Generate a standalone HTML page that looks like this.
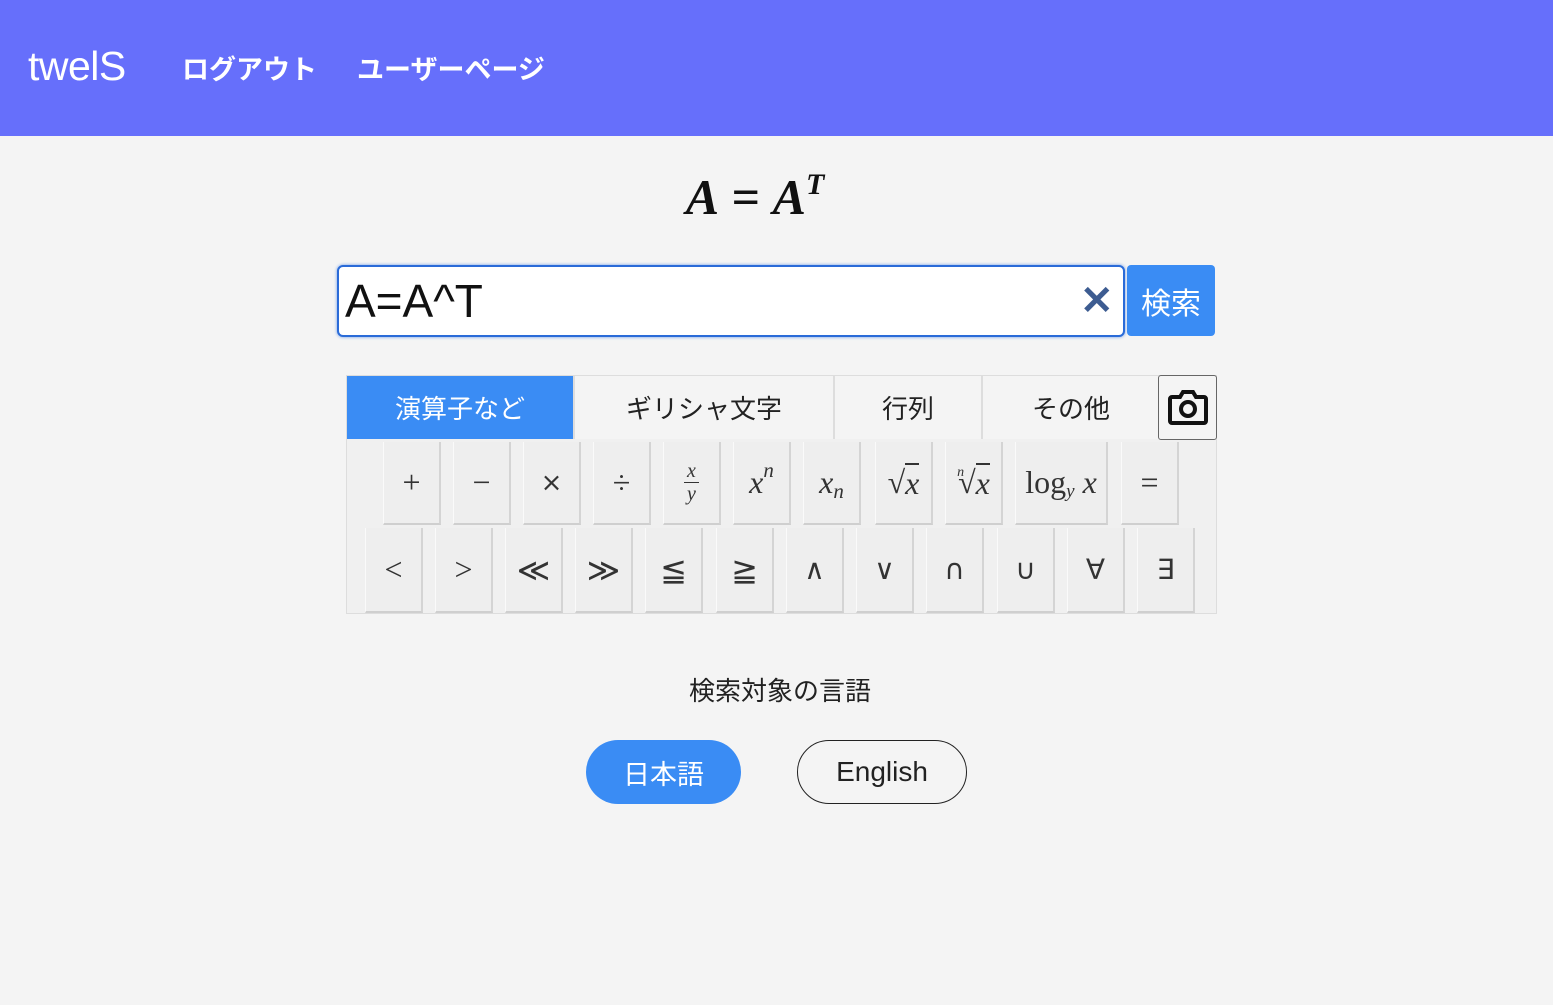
<!DOCTYPE html>
<html><head><meta charset="utf-8"><style>
*{box-sizing:border-box;margin:0;padding:0}
body{width:1553px;height:1005px;background:#f4f4f4;font-family:"Liberation Sans","Noto Sans CJK JP",sans-serif;position:relative;overflow:hidden}
.hd{position:absolute;left:0;top:0;width:1553px;height:136px;background:#666ffb;color:#fff}
.abs{position:absolute}
.key{position:absolute;width:58px;background:#eeeeee;border-right:2px solid #d4d4d4;border-bottom:2px solid #cfcfcf;border-left:1px solid #fafafa;display:flex;align-items:center;justify-content:center;font-family:"Liberation Serif","DejaVu Serif",serif;font-size:32px;color:#333}
.key span{display:inline-block}
.r1{top:442px;height:83px}
.r2{top:528px;height:85px}
.tab{position:absolute;top:376px;height:63px;display:flex;align-items:center;justify-content:center;font-size:26px;color:#222;background:#f4f4f4;border-right:2px solid #ddd}
i{font-style:italic}
.up{position:relative;top:-12px;font-size:21px}
.dn{position:relative;top:9px;font-size:21px}
</style></head><body>
<div class="hd">
<div class="abs" style="left:28px;top:43px;font-size:41px;letter-spacing:-0.5px">twelS</div>
<div class="abs" style="left:182px;top:48px;font-size:27px;font-weight:bold">ログアウト</div>
<div class="abs" style="left:357px;top:48px;font-size:27px;font-weight:bold">ユーザーページ</div>
</div>
<div class="abs" style="left:0;width:1510px;top:168px;text-align:center;font-family:'Liberation Serif',serif;font-size:50px;color:#111;font-weight:bold"><i>A</i> = <i>A</i><span style="font-size:30px;position:relative;top:-20px"><i>T</i></span></div>
<div class="abs" style="left:337px;top:265px;width:788px;height:72px;border:2px solid #2a6bd8;border-radius:6px;background:#fff;box-shadow:0 0 3px #6a9ae8"></div>
<div class="abs" style="left:345px;top:274px;font-size:46px;color:#111">A=A^T</div>
<div class="abs" style="left:1080px;top:278px;font-size:40px;color:#3d5c91;font-weight:bold">✕</div>
<div class="abs" style="left:1127px;top:265px;width:88px;height:71px;background:#3a8cf4;border-radius:4px;color:#fff;font-size:30px;display:flex;align-items:center;justify-content:center">検索</div>
<div class="abs" style="left:346px;top:375px;width:871px;height:239px;background:#f0f0f0;border:1px solid #ddd"></div>
<div class="tab" style="left:347px;width:228px;background:#3a8cf4;color:#fff">演算子など</div>
<div class="tab" style="left:575px;width:260px">ギリシャ文字</div>
<div class="tab" style="left:835px;width:148px">行列</div>
<div class="tab" style="left:983px;width:176px;border-right:none">その他</div>
<div class="abs" style="left:1158px;top:375px;width:59px;height:65px;border:1px solid #666;border-radius:3px;background:#f4f4f4;display:flex;align-items:center;justify-content:center">
<svg width="42" height="40" viewBox="0 0 42 40"><path d="M5 9h8l3-5h10l3 5h8a2 2 0 0 1 2 2v22a2 2 0 0 1-2 2H5a2 2 0 0 1-2-2V11a2 2 0 0 1 2-2z" fill="none" stroke="#111" stroke-width="4"/><circle cx="21" cy="21" r="7" fill="none" stroke="#111" stroke-width="4"/></svg></div>
<div class="key r1" style="left:383px">+</div>
<div class="key r1" style="left:453px">−</div>
<div class="key r1" style="left:523px;font-family:'DejaVu Sans';font-size:26px">×</div>
<div class="key r1" style="left:593px">÷</div>
<div class="key r1" style="left:663px;flex-direction:column;font-size:20px;line-height:22px"><i style="border-bottom:1px solid #333;padding:0 3px">x</i><i>y</i></div>
<div class="key r1" style="left:733px"><i>x</i><i class="up">n</i></div>
<div class="key r1" style="left:803px"><i>x</i><i class="dn">n</i></div>
<div class="key r1" style="left:875px">√<i style="border-top:2px solid #333">x</i></div>
<div class="key r1" style="left:945px"><i style="font-size:14px;position:relative;top:-10px;margin-right:-6px">n</i>√<i style="border-top:2px solid #333">x</i></div>
<div class="key r1" style="left:1015px;width:93px">log<i class="dn" style="font-size:19px">y</i>&nbsp;<i>x</i></div>
<div class="key r1" style="left:1121px">=</div>
<div class="key r2" style="left:365px">&lt;</div>
<div class="key r2" style="left:435px">&gt;</div>
<div class="key r2" style="left:505px;font-family:'DejaVu Sans';font-weight:200">≪</div>
<div class="key r2" style="left:575px;font-family:'DejaVu Sans'">≫</div>
<div class="key r2" style="left:645px;font-family:'DejaVu Sans'">≦</div>
<div class="key r2" style="left:716px;font-family:'DejaVu Sans'">≧</div>
<div class="key r2" style="left:786px;font-family:'DejaVu Sans';font-size:28px">∧</div>
<div class="key r2" style="left:856px;font-family:'DejaVu Sans';font-size:28px">∨</div>
<div class="key r2" style="left:926px;font-family:'DejaVu Sans';font-size:28px">∩</div>
<div class="key r2" style="left:997px;font-family:'DejaVu Sans';font-size:28px">∪</div>
<div class="key r2" style="left:1067px;font-family:'DejaVu Sans';font-size:28px">∀</div>
<div class="key r2" style="left:1137px;font-family:'DejaVu Sans';font-size:28px">∃</div>
<div class="abs" style="left:0;width:1560px;top:671px;text-align:center;font-size:26px;color:#222">検索対象の言語</div>
<div class="abs" style="left:586px;top:740px;width:155px;height:64px;border-radius:32px;background:#3a8cf4;color:#fff;font-size:27px;display:flex;align-items:center;justify-content:center">日本語</div>
<div class="abs" style="left:797px;top:740px;width:170px;height:64px;border-radius:32px;border:1.5px solid #222;color:#222;font-size:28px;display:flex;align-items:center;justify-content:center">English</div>
</body></html>
